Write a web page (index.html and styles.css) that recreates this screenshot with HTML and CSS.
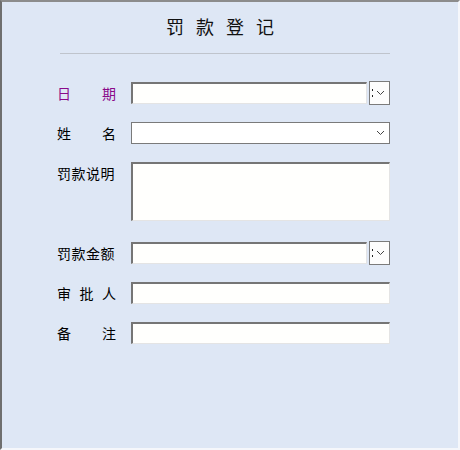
FILE: index.html
```html
<!DOCTYPE html>
<html lang="zh">
<head>
<meta charset="utf-8">
<title>罚款登记</title>
<link rel="stylesheet" href="styles.css">
</head>
<body>
<div class="window">
  <h1 class="title">罚款登记</h1>
  <div class="rule"></div>
  <div class="form">
    <div class="row">
      <span class="label spread purple"><span>日</span><span>期</span></span>
      <div class="field combo">
        <div class="input grow"></div>
        <div class="spin"><span class="dots"></span><svg width="9" height="6" viewBox="0 0 9 6"><path d="M1 1 L4.5 4.5 L8 1" fill="none" stroke="#444" stroke-width="1"/></svg></div>
      </div>
    </div>
    <div class="row">
      <span class="label spread"><span>姓</span><span>名</span></span>
      <div class="field">
        <div class="select"><svg width="9" height="6" viewBox="0 0 9 6"><path d="M1 1 L4.5 4.5 L8 1" fill="none" stroke="#444" stroke-width="1"/></svg></div>
      </div>
    </div>
    <div class="row tall">
      <span class="label">罚款说明</span>
      <div class="field">
        <div class="input area"></div>
      </div>
    </div>
    <div class="row">
      <span class="label">罚款金额</span>
      <div class="field combo">
        <div class="input grow"></div>
        <div class="spin"><span class="dots"></span><svg width="9" height="6" viewBox="0 0 9 6"><path d="M1 1 L4.5 4.5 L8 1" fill="none" stroke="#444" stroke-width="1"/></svg></div>
      </div>
    </div>
    <div class="row">
      <span class="label spread"><span>审</span><span>批</span><span>人</span></span>
      <div class="field">
        <div class="input"></div>
      </div>
    </div>
    <div class="row">
      <span class="label spread"><span>备</span><span>注</span></span>
      <div class="field">
        <div class="input"></div>
      </div>
    </div>
  </div>
</div>
</body>
</html>
```
FILE: styles.css
```css
html, body {
  margin: 0;
  padding: 0;
  background: #ffffff;
}
body {
  font-family: "Noto Sans CJK SC", "Noto Sans", sans-serif;
  color: #000;
}
.window {
  box-sizing: border-box;
  width: 460px;
  height: 450px;
  background: #dee7f5;
  border-top: 2px solid #8c8c8c;
  border-left: 2px solid #6f6f6f;
  border-right: 2px solid #f5f7fb;
  border-bottom: 2px solid #f5f7fb;
  padding-top: 12px;
}
.title {
  margin: 0;
  padding-right: 8px;
  text-align: center;
  font-size: 18px;
  font-weight: normal;
  line-height: 24px;
  letter-spacing: 12px;
  color: #111;
}
.rule {
  margin: 15px 0 0 58px;
  width: 330px;
  height: 1px;
  background: #bfc4cc;
}
.form {
  display: flex;
  flex-direction: column;
  gap: 18px;
  margin-top: 28px;
  padding-left: 55px;
}
.row {
  display: flex;
  align-items: center;
  gap: 15px;
  height: 22px;
}
.row.tall {
  height: 62px;
  align-items: flex-start;
}
.row.tall .label {
  margin-top: 1px;
}
.label {
  width: 59px;
  font-size: 14px;
  line-height: 20px;
  white-space: nowrap;
  letter-spacing: 0.5px;
}
.label.spread {
  display: flex;
  justify-content: space-between;
  letter-spacing: 0;
}
.purple {
  color: #8a0a8a;
}
.field {
  width: 259px;
  display: flex;
}
.field.combo {
  align-items: center;
  gap: 2px;
}
.input {
  box-sizing: border-box;
  width: 259px;
  height: 22px;
  background: #fffffd;
  border-style: solid;
  border-width: 2px 1px 1px 2px;
  border-color: #757575 #e4e4e4 #e4e4e4 #757575;
}
.input.grow {
  width: 236px;
  flex: none;
}
.input.area {
  height: 59px;
}
.spin {
  box-sizing: border-box;
  width: 22px;
  height: 24px;
  border: 1px solid #7b7b7b;
  background: #fdfdfd;
  display: flex;
  align-items: center;
  padding-left: 2px;
  gap: 3px;
}
.dots {
  width: 1px;
  height: 8px;
  background: linear-gradient(#222 0 2px, transparent 2px 6px, #222 6px 8px);
}
.select {
  box-sizing: border-box;
  width: 259px;
  height: 22px;
  background: #fff;
  border: 1px solid #7a7a7a;
  display: flex;
  align-items: center;
  justify-content: flex-end;
  padding-right: 4px;
}
```
